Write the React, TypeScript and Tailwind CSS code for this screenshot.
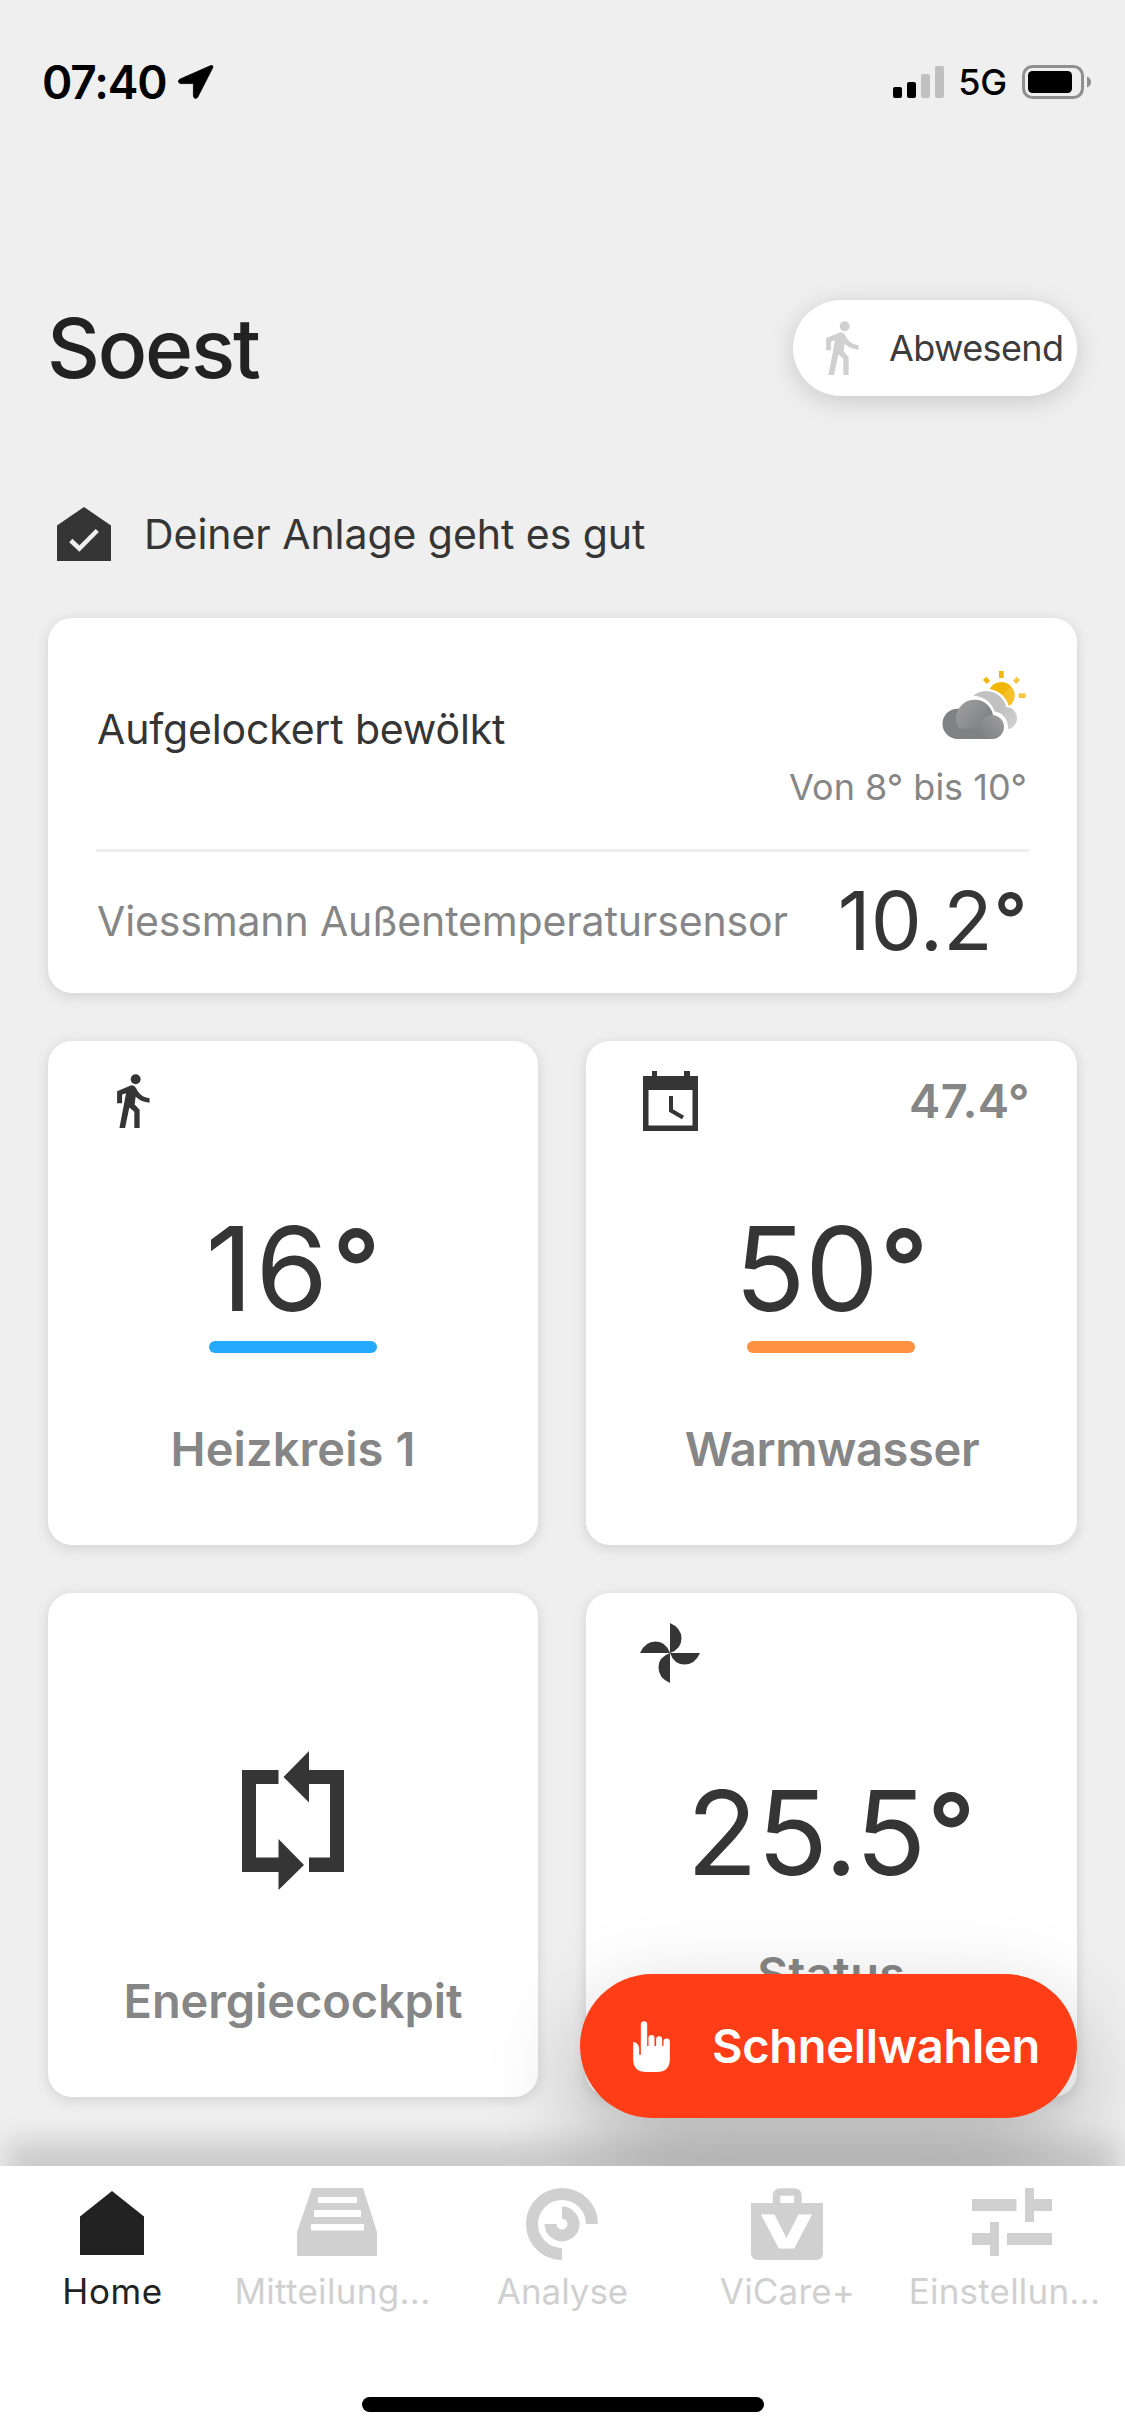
import type { ReactNode } from "react";

function Walker({ className }: { className: string }) {
  return (
    <svg viewBox="51 26 99 163" className={className} fill="currentColor" aria-hidden>
      <circle cx="107" cy="42" r="15" />
      <path d="M51 78L92 61Q102 58 108 68L114 79Q126 97 149 99V113Q124 111 107 95L104 118L119 134V189H103V140L88 127L75 189H58L78 84L66 88V114H51Z" />
    </svg>
  );
}

function LocationArrow() {
  return (
    <svg viewBox="0 0 36 34" className="ml-[11px] h-[34px] w-9" fill="#000" stroke="#000" strokeWidth="0.800" aria-hidden>
      <path d="M32.8.6L1.8 14.2Q-.2 15.6.6 17Q1.200 18.600 3 18.600H14.600Q15.400 18.600 15.400 19.400V31Q15.600 33 17.200 33.400Q18.800 33.600 19.800 32L34.800 2.600Q35.600 0 32.800.600Z" />
    </svg>
  );
}

function SignalBars() {
  return (
    <div className="flex h-8 items-end gap-[5px]">
      <span className="h-[11px] w-[9px] rounded-[2px] bg-black" />
      <span className="h-4 w-[9px] rounded-[2px] bg-black" />
      <span className="h-6 w-[9px] rounded-[2px] bg-[#c0c0c0]" />
      <span className="h-8 w-[9px] rounded-[2px] bg-[#c0c0c0]" />
    </div>
  );
}

function Battery() {
  return (
    <svg viewBox="0 0 70 34" className="ml-[15px] h-[34px] w-[70px]" aria-hidden>
      <rect x="1.5" y="1.5" width="59" height="31" rx="9" fill="none" stroke="#8f8f8f" strokeWidth="3" />
      <rect x="6" y="6" width="44" height="22" rx="4.5" fill="#000" />
      <path d="M65 11.5Q69 13 69 17T65 22.5Z" fill="#8f8f8f" />
    </svg>
  );
}

function HouseCheck() {
  return (
    <svg viewBox="57 507 54 54" className="h-[54px] w-[54px]" aria-hidden>
      <path d="M84 507L111 525.5V561H57V525.5Z" fill="#353535" />
      <path d="M70.8 540.5L79.3 548.5L97.3 530.5" fill="none" stroke="#efefef" strokeWidth="4.500" />
    </svg>
  );
}

function CloudySun() {
  return (
    <svg viewBox="720 210 255 210" className="mr-[3px] h-[70px] w-[85px]" aria-hidden>
      <defs>
        <linearGradient id="sun" x1="0" y1="0" x2="1" y2="1">
          <stop offset="0.5" stopColor="#f2b705" />
          <stop offset="0.52" stopColor="#f5c02a" />
          <stop offset="1" stopColor="#f5c02a" />
        </linearGradient>
        <linearGradient id="puff" x1="0.1" y1="0.2" x2="0.75" y2="0.75">
          <stop offset="0" stopColor="#9b9b9b" />
          <stop offset="1" stopColor="#808185" />
        </linearGradient>
        <linearGradient id="puffSmall" x1="0.9" y1="0.1" x2="0.1" y2="0.9">
          <stop offset="0" stopColor="#9b9b9b" />
          <stop offset="1" stopColor="#808185" />
        </linearGradient>
        <linearGradient id="back" x1="1" y1="1" x2="0" y2="0">
          <stop offset="0" stopColor="#d2d2d2" />
          <stop offset="1" stopColor="#bdbdbd" />
        </linearGradient>
      </defs>
      <g fill="#f2b705">
        <rect x="894" y="213" width="14" height="21" />
        <rect x="848" y="234" width="17" height="14" transform="rotate(45 856.5 241)" />
      </g>
      <g fill="#f6c944">
        <rect x="953" y="280" width="21" height="14" />
        <rect x="938" y="234" width="17" height="14" transform="rotate(-45 946.5 241)" />
      </g>
      <circle cx="901" cy="286" r="40" fill="url(#sun)" />
      <circle cx="856" cy="335" r="69" fill="#fff" />
      <circle cx="915" cy="355" r="39" fill="#fff" />
      <circle cx="856" cy="334" r="61" fill="#c1c1c1" />
      <circle cx="914" cy="355" r="34" fill="url(#back)" />
      <g fill="#fff">
        <circle cx="816" cy="355" r="68" />
        <circle cx="874" cy="381" r="47" />
        <rect x="770" y="381" width="150" height="39" />
      </g>
      <path d="M770 326H816V381H874V417H770A45.500 45.500 0 0 1 770 326Z" fill="#808185" />
      <circle cx="821" cy="355" r="56" fill="url(#puff)" />
      <path d="M770 386H850V417H770Z" fill="#808185" />
      <circle cx="873" cy="381" r="36" fill="url(#puffSmall)" />
    </svg>
  );
}

function CalendarClock() {
  return (
    <svg viewBox="643 1071 55 60" className="h-[60px] w-[55px]" fill="#353535" aria-hidden>
      <path fillRule="evenodd" d="M643 1076H698V1131H643ZM648.500 1090V1125.500H692.500V1090Z" />
      <path d="M652 1071H657V1077H652ZM684 1071H690V1077H684Z" />
      <path d="M671 1096V1110.500L683 1117.500" fill="none" stroke="#353535" strokeWidth="4" />
    </svg>
  );
}

function Fan() {
  const blade = "M0 -30Q11.500 -25 11.500 -14.500Q11.500 -4 0 0Z";
  return (
    <svg viewBox="-30 -30 60 60" className="h-[60px] w-[60px]" fill="#353535" aria-hidden>
      <path d={blade} />
      <path d={blade} transform="rotate(90)" />
      <path d={blade} transform="rotate(180)" />
      <path d={blade} transform="rotate(270)" />
    </svg>
  );
}

function EnergyLoop() {
  return (
    <svg viewBox="242 1751 102 139" className="h-[139px] w-[102px]" fill="#353535" aria-hidden>
      <path d="M242 1770H278.500V1784H256V1857.500H278.500V1839L304 1865L278.500 1890V1872H242Z" />
      <path d="M309 1872V1857.500H330V1784H309V1802.500L283.500 1777L309 1751V1770H344V1872Z" />
    </svg>
  );
}

function Hand() {
  return (
    <svg viewBox="51 36 110 153" className="h-[51px] w-[37px]" fill="#fff" aria-hidden>
      <path d="M51 99Q66 101 69 117V137H74V46a9.500 9.500 0 0 1 19 0V111H97V87a9 9 0 0 1 18 0V111H120V91a9 9 0 0 1 18 0V111H142V98a9.500 9.500 0 0 1 19 0V150Q161 189 122 189H90Q51 189 51 150Z" />
    </svg>
  );
}

function HomeIcon() {
  return (
    <svg viewBox="0 0 64 64" className="mt-[3px] h-16 w-16" fill="currentColor" aria-hidden>
      <path d="M32 0L64 25.500V64H0V25.500Z" />
    </svg>
  );
}

function TrayIcon() {
  return (
    <svg viewBox="297 2188 80 68" className="h-[68px] w-20" fill="currentColor" aria-hidden>
      <path
        fillRule="evenodd"
        d="M312 2188H363L377 2232V2256H297V2232ZM318 2197V2203H357V2197ZM314 2210V2217H361V2210ZM311 2224V2230.500H364V2224Z"
      />
    </svg>
  );
}

function AnalysisIcon() {
  return (
    <svg viewBox="-36 -36 72 72" className="h-[72px] w-[72px]" fill="none" stroke="currentColor" strokeWidth="12" aria-hidden>
      <path d="M30 0A30 30 0 1 0 0 30" />
      <path d="M0 -11.500A11.500 11.500 0 1 1 -11.500 0" />
    </svg>
  );
}

function CaseIcon() {
  return (
    <svg viewBox="751 2188 72 72" className="h-[72px] w-[72px]" fill="currentColor" aria-hidden>
      <path d="M751 2203H823V2253Q823 2260 816 2260H758Q751 2260 751 2253Z" />
      <path d="M776.500 2205V2196Q776.500 2192 780.500 2192H794Q798 2192 798 2196V2205" fill="none" stroke="currentColor" strokeWidth="7.500" />
      <text
        x="786.500"
        y="2248"
        textAnchor="middle"
        textLength="50"
        lengthAdjust="spacingAndGlyphs"
        fill="#fff"
        stroke="#fff"
        strokeWidth="0.800"
        className="font-['DejaVu_Sans',sans-serif] text-[45px] font-bold"
      >
        V
      </text>
    </svg>
  );
}

function SlidersIcon() {
  return (
    <svg viewBox="972 2188 80 68" className="h-[68px] w-20" fill="currentColor" aria-hidden>
      <path d="M972 2199H1016.500V2211H972ZM1025 2188H1034V2199H1052V2211H1034V2222H1025Z" />
      <path d="M972 2233H990V2222H999V2256H990V2245H972ZM1007 2233H1052V2245H1007Z" />
    </svg>
  );
}

/* Small, slightly heavier degree ring used next to the large readings. */
function Degree() {
  return <span className="ml-[0.02em] align-[0.07em] text-[0.89em] leading-none font-semibold">°</span>;
}

const cardShadow = "rounded-3xl bg-white shadow-[0_3px_14px_rgba(0,0,0,0.13)]";

function Tile({ children }: { children: ReactNode }) {
  return <section className={`flex h-[504px] flex-col items-center ${cardShadow}`}>{children}</section>;
}

function TileTop({ className, children }: { className: string; children?: ReactNode }) {
  return <div className={`flex h-[120px] w-full shrink-0 items-center justify-between ${className}`}>{children}</div>;
}

function TabItem({ icon, label, className }: { icon: ReactNode; label: string; className: string }) {
  return (
    <a className="flex w-[225px] shrink-0 flex-col items-center">
      <span className="flex h-[81px] items-start">{icon}</span>
      <span className={`text-[35px] leading-[44px] whitespace-nowrap ${className}`}>{label}</span>
    </a>
  );
}

export default function App() {
  return (
    <div className="flex h-[2436px] w-[1125px] flex-col overflow-hidden bg-[#efefef] font-['Inter',sans-serif] text-[#353535]">
      <main className="relative h-[2166px] shrink-0 overflow-hidden px-12">
        <header className="-mx-12 flex h-[164px] items-center justify-between pr-[33px] pl-[42px] text-black">
          <div className="flex items-center">
            <span className="text-[46px] leading-none font-semibold tracking-[-1.1px]">07:40</span>
            <LocationArrow />
          </div>
          <div className="flex items-center">
            <SignalBars />
            <span className="ml-[14px] text-[36px] leading-none font-medium tracking-[-0.25px]">5G</span>
            <Battery />
          </div>
        </header>

        <div className="mt-[136px] flex h-24 items-center justify-between">
          <h1 className="-ml-px pt-0.5 text-[82px] leading-none font-medium tracking-[-2.2px] text-[#222]">Soest</h1>
          <button className="flex h-24 w-[284px] items-center rounded-full bg-white pl-[33px] shadow-[0_5px_26px_rgba(0,0,0,0.16)]">
            <Walker className="h-[54px] w-[33px] text-[#d0d0d0]" />
            <span className="ml-[30px] text-[36px] leading-none tracking-[-0.61px] text-[#3c3c3c]">Abwesend</span>
          </button>
        </div>

        <div className="mt-[111px] flex h-[54px] items-center pl-[9px]">
          <HouseCheck />
          <p className="ml-[33px] text-[41px] leading-none tracking-[-0.05px]">Deiner Anlage geht es gut</p>
        </div>

        <section className={`mt-[57px] h-[375px] px-12 ${cardShadow}`}>
          <div className="flex h-[234px] items-start justify-between border-b-[3px] border-[#eeeeee]">
            <p className="ml-px pt-[81px] text-[41px] leading-[60px] tracking-[-0.16px]">Aufgelockert bewölkt</p>
            <div className="flex flex-col items-end pt-[52px]">
              <CloudySun />
              <p className="mt-[25px] mr-0.5 text-[36px] leading-[44px] text-[#868686]">Von 8° bis 10°</p>
            </div>
          </div>
          <div className="flex h-[139px] items-center justify-between">
            <p className="ml-px text-[41px] leading-none tracking-[-0.14px] text-[#868686]">Viessmann Außentemperatursensor</p>
            <p className="mr-0.5 text-[81px] leading-none">
              10.2
              <Degree />
            </p>
          </div>
        </section>

        <div className="mt-12 grid grid-cols-[490px_491px] gap-12">
          <Tile>
            <TileTop className="pl-[69px]">
              <Walker className="h-[54px] w-[33px]" />
            </TileTop>
            <p className="mt-[38px] ml-0.5 text-[117px] leading-[140px] tracking-[2.4px]">
              16
              <Degree />
            </p>
            <div className="mt-0.5 h-3 w-[168px] rounded-full bg-[#25aaff]" />
            <h2 className="mt-[66px] text-[47px] leading-[60px] font-semibold tracking-[0.11px] text-[#868686]">Heizkreis 1</h2>
          </Tile>
          <Tile>
            <TileTop className="pr-[47px] pl-[57px]">
              <CalendarClock />
              <span className="pb-0.5 text-[47px] leading-none font-semibold tracking-[0.4px] text-[#868686]">47.4°</span>
            </TileTop>
            <p className="mt-[38px] mr-px text-[117px] leading-[140px] tracking-[-0.6px]">
              50
              <Degree />
            </p>
            <div className="mt-0.5 mr-px h-3 w-[168px] rounded-full bg-[#ff9143]" />
            <h2 className="mt-[66px] ml-px text-[47px] leading-[60px] font-semibold tracking-[-0.39px] text-[#868686]">Warmwasser</h2>
          </Tile>
          <Tile>
            <div className="mt-[158px]">
              <EnergyLoop />
            </div>
            <h2 className="mt-[81px] text-[47px] leading-[60px] font-semibold tracking-[-0.11px] text-[#868686]">Energiecockpit</h2>
          </Tile>
          <Tile>
            <TileTop className="pl-[54px]">
              <Fan />
            </TileTop>
            <p className="mt-[50px] mr-0.5 text-[117px] leading-[140px] tracking-[-0.9px]">
              25.5
              <Degree />
            </p>
            <h2 className="mt-[41px] text-[47px] leading-[60px] font-semibold tracking-[0.45px] text-[#868686]">Status</h2>
          </Tile>
        </div>

        <button className="absolute right-12 bottom-12 flex h-36 w-[497px] items-center rounded-full bg-[#ff3e17] pl-[53px] text-white shadow-[0_36px_96px_rgba(0,0,0,0.26)]">
          <Hand />
          <span className="ml-[42px] pb-0.5 text-[47px] leading-none font-semibold tracking-[-0.3px]">Schnellwahlen</span>
        </button>
      </main>

      <nav className="relative flex grow flex-col items-center bg-white shadow-[0_-31px_26px_-6px_rgba(0,0,0,0.15)]">
        <div className="-ml-0.5 flex w-[1125px] pt-[22px] text-[#d0d0d0]">
          <TabItem icon={<span className="text-[#222]"><HomeIcon /></span>} label="Home" className="ml-0.5 tracking-[0.6px] text-[#222]" />
          <TabItem icon={<TrayIcon />} label="Mitteilung..." className="mr-2 tracking-[0.3px]" />
          <TabItem icon={<AnalysisIcon />} label="Analyse" className="ml-0.5 tracking-[-0.05px]" />
          <TabItem icon={<CaseIcon />} label="ViCare+" className="ml-0.5 tracking-[0.19px]" />
          <TabItem icon={<SlidersIcon />} label="Einstellun..." className="mr-3.5 tracking-[0.2px]" />
        </div>
        <div className="mt-[84px] h-[15px] w-[402px] rounded-full bg-black" />
      </nav>
    </div>
  );
}
